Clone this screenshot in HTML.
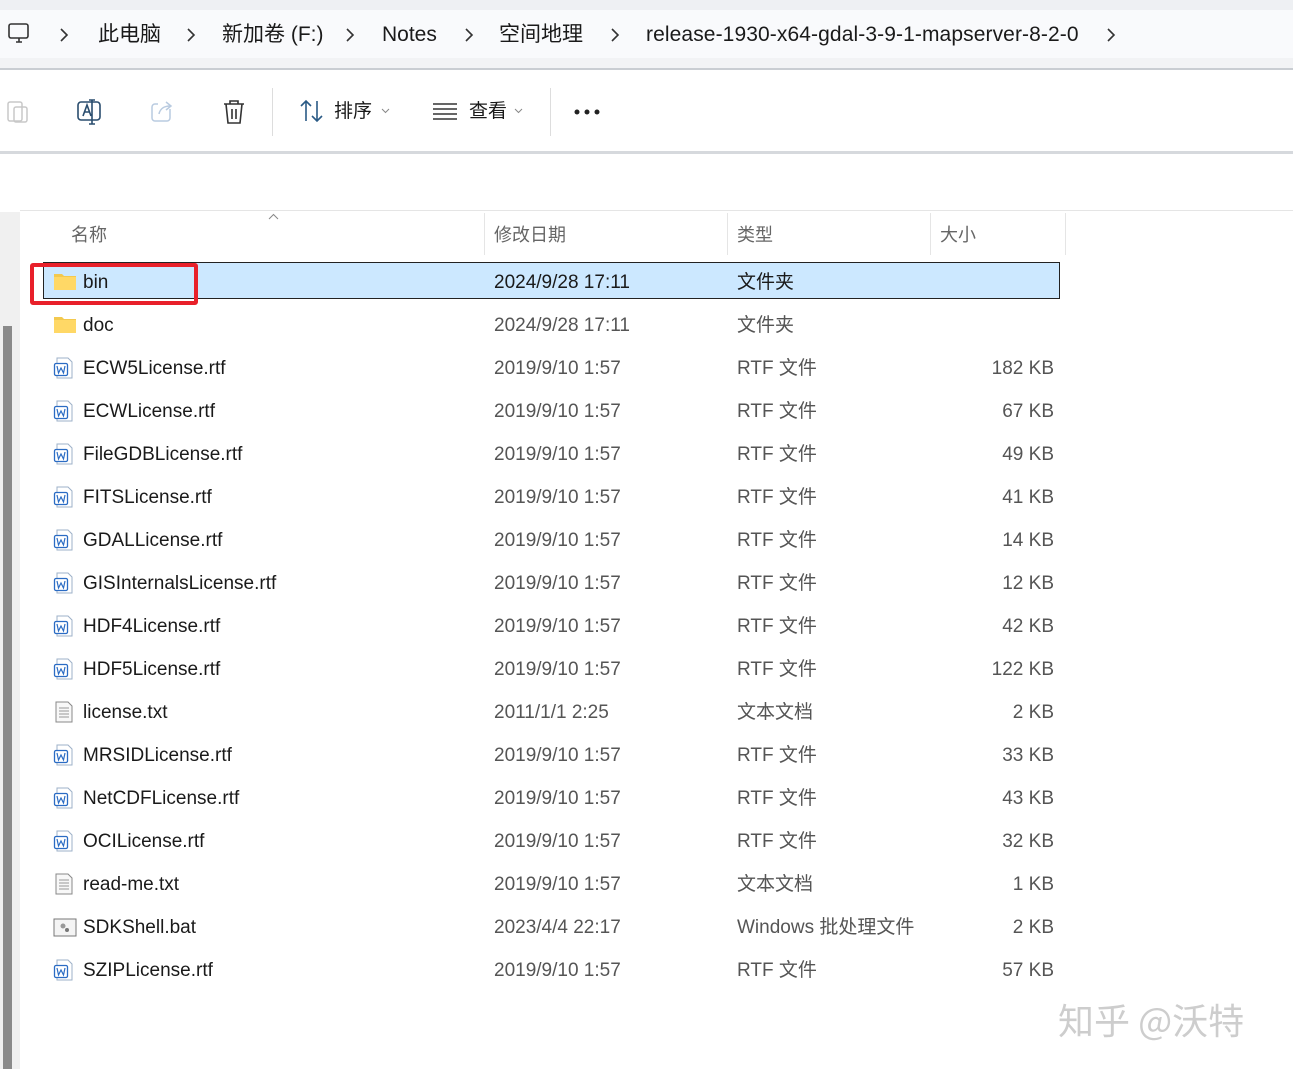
<!DOCTYPE html>
<html><head><meta charset="utf-8"><style>
*{margin:0;padding:0;box-sizing:border-box}
body{width:1293px;height:1069px;overflow:hidden;background:#fff;font-family:"Liberation Sans","Noto Sans CJK SC",sans-serif;position:relative;color:#1a1a1a}
.a{position:absolute;white-space:nowrap;line-height:26px}
.bc{font-size:21px;color:#1a1a1a;top:22px}
.chev{top:27px}
.hdr{font-size:18px;color:#666;top:222px}
.sep{position:absolute;top:213px;height:42px;width:1px;background:#e5e5e5}
.row{position:absolute;left:0;height:43px;width:1293px;font-size:19px}
.row span{position:absolute;top:11px;white-space:nowrap;line-height:26px}
.n{left:83px;color:#1a1a1a}
.d{left:494px;color:#555}
.t{left:737px;color:#555}
.s{right:239px;color:#555}
.ic{position:absolute;left:53px;top:12px}
</style></head><body>
<div class="a" style="left:0;top:0;width:1293px;height:10px;background:#eef0f3"></div>
<div class="a" style="left:0;top:10px;width:1293px;height:50px;background:#f9fafc"></div>
<div class="a" style="left:0;top:58px;width:1293px;height:10px;background:#f2f3f5"></div>
<div class="a" style="left:0;top:68px;width:1293px;height:2px;background:#c9cdd2"></div>
<svg class="a" style="left:7px;top:22px" width="24" height="24" viewBox="0 0 24 24" fill="none" stroke="#333" stroke-width="1.6"><rect x="2" y="2" width="19" height="14" rx="2"/><path d="M9 20h6M12 16v4"/></svg>
<svg class="a chev" style="left:59px" width="10" height="16" viewBox="0 0 10 16" fill="none" stroke="#333" stroke-width="1.6"><path d="M2 2l6 6-6 6"/></svg>
<span class="a bc" style="left:98px">此电脑</span>
<svg class="a chev" style="left:186px" width="10" height="16" viewBox="0 0 10 16" fill="none" stroke="#333" stroke-width="1.6"><path d="M2 2l6 6-6 6"/></svg>
<span class="a bc" style="left:222px">新加卷 (F:)</span>
<svg class="a chev" style="left:345px" width="10" height="16" viewBox="0 0 10 16" fill="none" stroke="#333" stroke-width="1.6"><path d="M2 2l6 6-6 6"/></svg>
<span class="a bc" style="left:382px">Notes</span>
<svg class="a chev" style="left:464px" width="10" height="16" viewBox="0 0 10 16" fill="none" stroke="#333" stroke-width="1.6"><path d="M2 2l6 6-6 6"/></svg>
<span class="a bc" style="left:499px">空间地理</span>
<svg class="a chev" style="left:610px" width="10" height="16" viewBox="0 0 10 16" fill="none" stroke="#333" stroke-width="1.6"><path d="M2 2l6 6-6 6"/></svg>
<span class="a bc" style="left:646px;letter-spacing:0.1px">release-1930-x64-gdal-3-9-1-mapserver-8-2-0</span>
<svg class="a chev" style="left:1106px" width="10" height="16" viewBox="0 0 10 16" fill="none" stroke="#333" stroke-width="1.6"><path d="M2 2l6 6-6 6"/></svg>

<svg class="a" style="left:6px;top:98px" width="24" height="26" viewBox="0 0 24 26" fill="none" stroke="#c8c8c8" stroke-width="1.5"><rect x="2" y="4" width="14" height="19" rx="2"/><rect x="8" y="9" width="13" height="15" rx="2"/></svg>
<svg class="a" style="left:76px;top:98px" width="28" height="28" viewBox="0 0 28 28" fill="none" stroke="#2a4d6e" stroke-width="1.6"><rect x="2" y="4" width="22" height="18" rx="3"/><path d="M7 18l4-11 4 11M8.5 14h5M16 2v24M13 2h6M13 26h6"/></svg>
<svg class="a" style="left:150px;top:99px" width="26" height="24" viewBox="0 0 26 24" fill="none" stroke="#b9cbe0" stroke-width="1.5"><path d="M20 10V19a3 3 0 0 1-3 3H5a3 3 0 0 1-3-3V8a3 3 0 0 1 3-3h3"/><path d="M9 15c1-5 5-8 11-8M16 3l5 4-5 4"/></svg>
<svg class="a" style="left:221px;top:98px" width="26" height="28" viewBox="0 0 26 28" fill="none" stroke="#333" stroke-width="1.6"><path d="M3 6h20M9 6V3h8v3M5 6l2 19h12l2-19M11 11v10M15 11v10"/></svg>
<div class="a" style="left:272px;top:88px;width:1px;height:48px;background:#ddd"></div>
<svg class="a" style="left:299px;top:99px" width="26" height="24" viewBox="0 0 26 24" fill="none" stroke="#2a5a85" stroke-width="1.6"><path d="M7 22V2M2 7l5-5 5 5M18 2v20M13 17l5 5 5-5"/></svg>
<span class="a" style="left:334px;top:99px;font-size:19px">排序</span>
<svg class="a" style="left:381px;top:108px" width="9" height="6" viewBox="0 0 9 6" fill="none" stroke="#888"><path d="M1 1l3.5 3.5L8 1"/></svg>
<svg class="a" style="left:432px;top:102px" width="26" height="18" viewBox="0 0 26 18" stroke="#333" stroke-width="1.5"><path d="M1 2h24M1 7h24M1 12h24M1 17h24"/></svg>
<span class="a" style="left:469px;top:99px;font-size:19px">查看</span>
<svg class="a" style="left:514px;top:108px" width="9" height="6" viewBox="0 0 9 6" fill="none" stroke="#888"><path d="M1 1l3.5 3.5L8 1"/></svg>
<div class="a" style="left:550px;top:88px;width:1px;height:48px;background:#ddd"></div>
<svg class="a" style="left:574px;top:108px" width="28" height="8" viewBox="0 0 28 8" fill="#222"><circle cx="3" cy="4" r="2.5"/><circle cx="13" cy="4" r="2.5"/><circle cx="23" cy="4" r="2.5"/></svg>
<div class="a" style="left:0;top:151px;width:1293px;height:3px;background:#d6d9dd"></div>

<div class="a" style="left:0;top:212px;width:20px;height:857px;background:#f0f0f0"></div>
<div class="a" style="left:3px;top:326px;width:9px;height:743px;background:#8a8a8a"></div>
<div class="a" style="left:20px;top:210px;width:1273px;height:1px;background:#e5e5e5"></div>

<span class="a hdr" style="left:71px">名称</span>
<svg class="a" style="left:268px;top:213px" width="11" height="7" viewBox="0 0 11 7" fill="none" stroke="#888"><path d="M1 6l4.5-4.5L10 6"/></svg>
<div class="sep" style="left:484px"></div>
<span class="a hdr" style="left:494px">修改日期</span>
<div class="sep" style="left:727px"></div>
<span class="a hdr" style="left:737px">类型</span>
<div class="sep" style="left:930px"></div>
<span class="a hdr" style="left:940px">大小</span>
<div class="sep" style="left:1065px"></div>

<div class="a" style="left:43px;top:262px;width:1017px;height:37px;background:#cce8ff;border:1px solid #222"></div>

<div id="rows"></div>
<div class="row" style="top:259px"><svg class="ic" width="24" height="20" viewBox="0 0 24 20"><path d="M1 3h8l2 2h12v14H1z" fill="#f3c94f"/><path d="M1 6h22v13H1z" fill="#ffd866"/></svg><span class="n">bin</span><span class="d" style="color:#1a1a1a">2024/9/28 17:11</span><span class="t" style="color:#1a1a1a">文件夹</span></div>
<div class="row" style="top:302px"><svg class="ic" width="24" height="20" viewBox="0 0 24 20"><path d="M1 3h8l2 2h12v14H1z" fill="#f3c94f"/><path d="M1 6h22v13H1z" fill="#ffd866"/></svg><span class="n">doc</span><span class="d">2024/9/28 17:11</span><span class="t">文件夹</span></div>

<div class="a" style="left:30px;top:263px;width:168px;height:42px;border:4px solid #e8202a;border-radius:3px"></div>

<script>
var W='<svg class="ic" width="22" height="22" viewBox="0 0 22 22" fill="none"><path d="M4 1h11l4 4v16H4z" fill="#fff" stroke="#9db1c8"/><rect x="1.5" y="6.5" width="13" height="12" rx="1.5" fill="#fff" stroke="#2b6cc4" stroke-width="1.3"/><path d="M4 9l1.5 7 2.5-5 2.5 5 1.5-7" stroke="#2b6cc4" stroke-width="1.2"/></svg>';
var T='<svg class="ic" width="22" height="22" viewBox="0 0 22 22" fill="none"><path d="M3 1h12l4 4v16H3z" fill="#f8f8f8" stroke="#888"/><path d="M6 7h10M6 10h10M6 13h10M6 16h10" stroke="#999"/></svg>';
var B='<svg class="ic" width="24" height="22" viewBox="0 0 24 22" fill="none"><rect x="1" y="3" width="22" height="17" fill="#f4f4f4" stroke="#777"/><circle cx="10" cy="10" r="2.5" fill="#999"/><circle cx="14" cy="14" r="2" fill="#777"/></svg>';
var R=[["ECW5License.rtf","2019/9/10 1:57","RTF 文件","182 KB",W],["ECWLicense.rtf","2019/9/10 1:57","RTF 文件","67 KB",W],["FileGDBLicense.rtf","2019/9/10 1:57","RTF 文件","49 KB",W],["FITSLicense.rtf","2019/9/10 1:57","RTF 文件","41 KB",W],["GDALLicense.rtf","2019/9/10 1:57","RTF 文件","14 KB",W],["GISInternalsLicense.rtf","2019/9/10 1:57","RTF 文件","12 KB",W],["HDF4License.rtf","2019/9/10 1:57","RTF 文件","42 KB",W],["HDF5License.rtf","2019/9/10 1:57","RTF 文件","122 KB",W],["license.txt","2011/1/1 2:25","文本文档","2 KB",T],["MRSIDLicense.rtf","2019/9/10 1:57","RTF 文件","33 KB",W],["NetCDFLicense.rtf","2019/9/10 1:57","RTF 文件","43 KB",W],["OCILicense.rtf","2019/9/10 1:57","RTF 文件","32 KB",W],["read-me.txt","2019/9/10 1:57","文本文档","1 KB",T],["SDKShell.bat","2023/4/4 22:17","Windows 批处理文件","2 KB",B],["SZIPLicense.rtf","2019/9/10 1:57","RTF 文件","57 KB",W]];
var h='';R.forEach(function(r,i){h+='<div class="row" style="top:'+(345+i*43)+'px">'+r[4]+'<span class="n">'+r[0]+'</span><span class="d">'+r[1]+'</span><span class="t">'+r[2]+'</span><span class="s">'+r[3]+'</span></div>';});
document.getElementById('rows').outerHTML=h;
</script>
<span class="a" style="left:1058px;top:997px;font-size:36px;line-height:44px;color:#cdcdcd;font-family:'Noto Sans CJK SC',sans-serif">知乎 @沃特</span>
</body></html>
